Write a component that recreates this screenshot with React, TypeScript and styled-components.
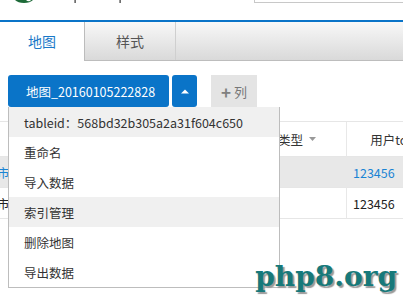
import React from "react";
import styled, { createGlobalStyle } from "styled-components";

const GlobalStyle = createGlobalStyle`
  html, body { margin: 0; padding: 0; background: #fff; overflow: hidden; }
  body {
    font-family: "Noto Sans CJK SC", "Open Sans", sans-serif;
    font-size: 12.5px;
    color: #333;
  }
  * { box-sizing: border-box; }
`;

const Page = styled.div`
  position: relative;
  width: 403px;
  height: 297px;
  overflow: hidden;
`;

const TopBar = styled.header`
  height: 20px;
  display: flex;
  align-items: flex-start;
  overflow: hidden;
`;

const Logo = styled.svg`
  flex: none;
  display: block;
`;

const SearchBox = styled.div`
  flex: none;
  margin-left: auto;
  margin-top: -28px;
  margin-right: -11px;
  width: 160px;
  height: 31px;
  border: 1px solid #c8c8c8;
  background: #fff;
`;

const TabBar = styled.nav`
  display: flex;
  height: 41px;
  border-top: 2px solid #0a74c8;
  border-bottom: 1px solid #bdbdbd;
  background: linear-gradient(#f8f8f8, #d9d9d9);
`;

const Tab = styled.div<{ $active?: boolean; $width: number }>`
  flex: none;
  width: ${(p) => p.$width}px;
  height: ${(p) => (p.$active ? 39 : 38)}px;
  display: flex;
  align-items: center;
  justify-content: center;
  font-size: 14px;
  color: ${(p) => (p.$active ? "#1a78c8" : "#555")};
  background: ${(p) => (p.$active ? "#fff" : "transparent")};
  border-left: ${(p) => (p.$active ? "none" : "1px solid #bcbcbc")};
  border-right: ${(p) => (p.$active ? "none" : "1px solid #cfcfcf")};
  padding-bottom: ${(p) => (p.$active ? 2 : 0)}px;
`;

const Toolbar = styled.div`
  display: flex;
  align-items: flex-start;
  gap: 14px;
  padding: 14px 0 0 8px;
`;

const SplitButton = styled.div`
  position: relative;
  display: flex;
  gap: 3px;
`;

const PrimaryButton = styled.button<{ $width: number; $center?: boolean }>`
  width: ${(p) => p.$width}px;
  height: 32px;
  border: none;
  border-radius: 3px;
  background: #0a74c8;
  color: #fff;
  font-family: inherit;
  font-size: 12.5px;
  display: flex;
  align-items: center;
  justify-content: ${(p) => (p.$center ? "center" : "flex-start")};
  padding: 0 0 0 ${(p) => (p.$center ? 0 : 18)}px;
  cursor: pointer;
`;

const GreyButton = styled.button`
  width: 46px;
  height: 32px;
  border: none;
  border-radius: 0;
  background: #e4e4e4;
  color: #777;
  font-family: inherit;
  font-size: 13px;
  display: flex;
  align-items: center;
  justify-content: center;
  gap: 3px;
  padding: 0;
`;

const Plus = styled.span`
  font-size: 17px;
  font-weight: bold;
  line-height: 1;
  color: #808080;
`;

const Menu = styled.ul`
  position: absolute;
  top: 32px;
  left: 0;
  z-index: 2;
  width: 272px;
  margin: 0;
  padding: 0;
  list-style: none;
  background: #fff;
  border: 1px solid #bdbdbd;
  border-top: none;
`;

const MenuItem = styled.li<{ $hover?: boolean }>`
  height: 30px;
  display: flex;
  align-items: center;
  padding-left: 15px;
  background: ${(p) => (p.$hover ? "#f0f0f0" : "#fff")};
  color: #333;
  font-size: 12.5px;
  white-space: nowrap;
`;

const Table = styled.div`
  margin: 14px 0 0 -40px;
  display: grid;
  grid-template-columns: 48px 240px 98px 106px;
  border-top: 1px solid #e6e6e6;
`;

const HeadCell = styled.div<{ $divider?: boolean }>`
  height: 35px;
  display: flex;
  align-items: center;
  justify-content: center;
  gap: 6px;
  color: #333;
  font-size: 12.5px;
  white-space: nowrap;
  border-left: ${(p) => (p.$divider ? "1px solid #e8e8e8" : "none")};
  border-bottom: 1px solid #e6e6e6;
`;

const Cell = styled.div<{ $shade?: boolean; $link?: boolean; $divider?: boolean; $pad?: number }>`
  height: 31px;
  display: flex;
  align-items: center;
  padding-left: ${(p) => p.$pad ?? 6}px;
  background: ${(p) => (p.$shade ? "#e8e8e8" : "#fff")};
  color: ${(p) => (p.$link ? "#1a84d4" : "#222")};
  font-size: 12.5px;
  white-space: nowrap;
  overflow: hidden;
  border-left: ${(p) => (p.$divider ? "1px solid #e8e8e8" : "none")};
  border-bottom: 1px solid #e6e6e6;
`;

const Watermark = styled.div`
  position: absolute;
  right: 6px;
  bottom: 6px;
  z-index: 3;
  font-family: "DejaVu Serif", serif;
  font-weight: bold;
  font-size: 28px;
  line-height: 28px;
  color: #17797a;
  text-shadow: 2px 2px 1px #9a9a9a;
`;

const rows = [
  { city: "长沙市", token: "123456", shade: true, link: true },
  { city: "长沙市", token: "123456", shade: false, link: false },
];

const menuItems = [
  { label: "tableid：568bd32b305a2a31f604c650", hover: true },
  { label: "重命名" },
  { label: "导入数据" },
  { label: "索引管理", hover: true },
  { label: "删除地图" },
  { label: "导出数据" },
];

export default function App() {
  return (
    <Page>
      <GlobalStyle />
      <TopBar>
        <Logo width="140" height="20" viewBox="0 0 140 20">
          <path d="M15 0 Q18 3 24 3 Q30 3 33 0 Z" fill="#1d6a38" />
          <path d="M26 0 Q28 2 30 1 L31 0 Z" fill="#ffffff" />
          <rect x="74.5" y="0" width="1.2" height="3" fill="#333" />
          <rect x="119.5" y="0" width="1.2" height="3" fill="#333" />
        </Logo>
        <SearchBox />
      </TopBar>
      <TabBar>
        <Tab $active $width={84}>地图</Tab>
        <Tab $width={92}>样式</Tab>
      </TabBar>
      <Toolbar>
        <SplitButton>
          <PrimaryButton $width={161}>地图_20160105222828</PrimaryButton>
          <PrimaryButton $width={25} $center aria-label="展开">
            <svg width="8" height="5" viewBox="0 0 8 5">
              <path d="M0 4.5 L4 0.5 L8 4.5 Z" fill="#fff" />
            </svg>
          </PrimaryButton>
          <Menu>
            {menuItems.map((m) => (
              <MenuItem key={m.label} $hover={m.hover}>
                {m.label}
              </MenuItem>
            ))}
          </Menu>
        </SplitButton>
        <GreyButton>
          <Plus>+</Plus>
          <span>列</span>
        </GreyButton>
      </Toolbar>
      <Table>
        <HeadCell>城市</HeadCell>
        <HeadCell>名称</HeadCell>
        <HeadCell>
          类型
          <svg width="7" height="4" viewBox="0 0 7 4">
            <path d="M0 0 L7 0 L3.5 4 Z" fill="#999" />
          </svg>
        </HeadCell>
        <HeadCell $divider>用户token</HeadCell>
        {rows.map((r, i) => (
          <React.Fragment key={i}>
            <Cell $shade={r.shade} $link={r.link} $pad={12}>{r.city}</Cell>
            <Cell $shade={r.shade} $link={r.link}>长沙市地图</Cell>
            <Cell $shade={r.shade}>点</Cell>
            <Cell $shade={r.shade} $link={r.link} $divider>{r.token}</Cell>
          </React.Fragment>
        ))}
      </Table>
      <Watermark>php8.org</Watermark>
    </Page>
  );
}
